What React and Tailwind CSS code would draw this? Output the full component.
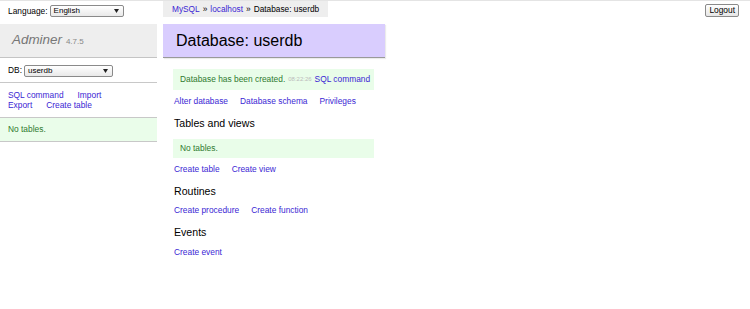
import React from "react";

const font = { fontFamily: '"Liberation Sans", Arial, sans-serif' };

const Caret = () => (
  <svg width="5" height="4" viewBox="0 0 5 4" className="shrink-0">
    <path d="M0 0 L5 0 L2.5 4 Z" fill="#222" />
  </svg>
);

const FakeSelect = ({ value, className }) => (
  <div
    className={`flex items-center justify-between h-[12px] border border-[#8a8a8a] rounded-[2px] bg-gradient-to-b from-white to-[#e9e9e9] pl-[3px] pr-[4px] text-[8px] text-black ${className}`}
  >
    <span className="leading-none">{value}</span>
    <Caret />
  </div>
);

const Link = ({ children }) => (
  <a className="text-[#3b1fd4] cursor-pointer whitespace-nowrap">{children}</a>
);

const Sidebar = () => (
  <div className="w-[157px] shrink-0">
    {/* Language */}
    <div className="h-[23px] flex items-start pt-[4px] pl-[8px] gap-[2px]">
      <span className="text-[8.4px] leading-[12px] text-black">Language:</span>
      <FakeSelect value="English" className="w-[74px]" />
    </div>

    {/* Title */}
    <div className="h-[34px] bg-[#eeeeee] border-b border-[#c4c4c4] flex items-center pl-[12px] gap-[4px]">
      <span className="text-[13.4px] italic text-[#777]">Adminer</span>
      <span className="text-[8px] text-[#888] mt-[2px]">4.7.5</span>
    </div>

    {/* DB select */}
    <div className="h-[25px] border-b border-[#c8c8c8] flex items-center pl-[8px] gap-[2px] pt-[1px]">
      <span className="text-[8.4px] text-black">DB:</span>
      <FakeSelect value="userdb" className="w-[89px]" />
    </div>

    {/* Links */}
    <div className="h-[34px] flex flex-col pl-[8px] pt-[7px] text-[8.4px] leading-[10px]">
      <div className="flex gap-[14px]">
        <Link>SQL command</Link>
        <Link>Import</Link>
      </div>
      <div className="flex gap-[14px]">
        <Link>Export</Link>
        <Link>Create table</Link>
      </div>
    </div>

    {/* No tables */}
    <div className="h-[25px] bg-[#eafdea] border-y border-[#c8c8c8] flex items-center pl-[8px] text-[8.4px] text-[#2f7a2f]">
      No tables.
    </div>
  </div>
);

const LinkRow = ({ links, className = "" }) => (
  <div className={`h-[12px] flex items-center gap-[12px] pl-[11px] text-[8.4px] ${className}`}>
    {links.map((l) => (
      <Link key={l}>{l}</Link>
    ))}
  </div>
);

const SectionTitle = ({ children, className = "" }) => (
  <div className={`h-[16px] flex items-center pl-[11px] text-[10.6px] text-black ${className}`}>
    {children}
  </div>
);

const Content = () => (
  <div className="ml-[6px] w-[222px] shrink-0">
    {/* Breadcrumb */}
    <div className="flex w-fit h-[16px] items-center bg-[#eeeeee] px-[9px] text-[8.3px] text-black whitespace-nowrap">
      <Link>MySQL</Link>
      <span className="mx-[3px]">»</span>
      <Link>localhost</Link>
      <span className="mx-[3px]">»</span>
      <span>Database: userdb</span>
    </div>

    {/* Heading */}
    <div className="mt-[7px] h-[34px] bg-[#d9cdfe] border-b border-[#999] shadow-[1px_1px_1px_rgba(0,0,0,0.08)] flex items-center pl-[13px] text-[16px] text-black">
      Database: userdb
    </div>

    {/* Message */}
    <div className="mt-[11px] ml-[10px] w-[201px] h-[21px] bg-[#e9fde9] flex items-center pl-[7px] text-[8.4px] text-[#2f7a2f] whitespace-nowrap">
      <span>Database has been created.</span>
      <span className="ml-[3px] text-[6px] text-[#bbb]">08:22:26</span>
      <span className="ml-[3px]">
        <Link>SQL command</Link>
      </span>
    </div>

    <LinkRow className="mt-[5px]" links={["Alter database", "Database schema", "Privileges"]} />

    <SectionTitle className="mt-[9px]">Tables and views</SectionTitle>

    <div className="mt-[7px] ml-[10px] w-[201px] h-[19px] bg-[#e9fde9] flex items-center pl-[7px] text-[8.4px] text-[#2f7a2f]">
      No tables.
    </div>

    <LinkRow className="mt-[5px]" links={["Create table", "Create view"]} />

    <SectionTitle className="mt-[9px]">Routines</SectionTitle>
    <LinkRow className="mt-[4px]" links={["Create procedure", "Create function"]} />

    <SectionTitle className="mt-[9px]">Events</SectionTitle>
    <LinkRow className="mt-[5px]" links={["Create event"]} />
  </div>
);

export default function App() {
  return (
    <div className="w-[750px] h-[309px] bg-white border-t border-[#e4e4e4] flex overflow-hidden" style={font}>
      <Sidebar />
      <Content />
      <div className="ml-auto pr-[11px] pt-[3px] flex items-start">
        <button className="flex items-center h-[13px] px-[3px] border border-[#8a8a8a] rounded-[2px] bg-gradient-to-b from-white to-[#e6e6e6] text-[8.4px] leading-none text-black">
          Logout
        </button>
      </div>
    </div>
  );
}
